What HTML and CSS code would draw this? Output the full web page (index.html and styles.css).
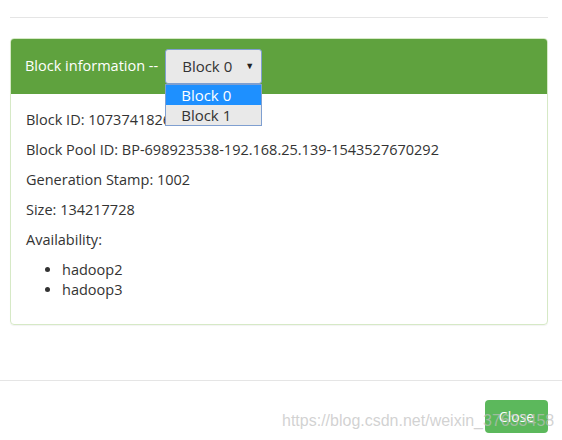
FILE: index.html
```html
<!DOCTYPE html>
<html lang="en">
<head>
  <meta charset="UTF-8" />
  <title>Block information</title>
  <link rel="stylesheet" href="styles.css">
</head>
<body>
  <div class="modal">
    <div class="modal-body">
      <hr class="rule">
      <div class="panel">
        <div class="panel-heading">
          <span class="panel-title">Block information --</span>
          <div class="select">
            <span class="select-value">Block 0</span>
            <span class="select-arrow">&#9660;</span>
            <ul class="select-list">
              <li class="active">Block 0</li>
              <li>Block 1</li>
            </ul>
          </div>
        </div>
        <div class="panel-body">
          <p>Block ID: 1073741826</p>
          <p>Block Pool ID: BP-698923538-192.168.25.139-1543527670292</p>
          <p>Generation Stamp: 1002</p>
          <p>Size: 134217728</p>
          <p>Availability:</p>
          <ul>
            <li>hadoop2</li>
            <li>hadoop3</li>
          </ul>
        </div>
      </div>
    </div>
    <div class="modal-footer">
      <button class="btn">Close</button>
      <span class="watermark">https://blog.csdn.net/weixin_37633458</span>
    </div>
  </div>
</body>
</html>
```

FILE: styles.css
```css
body {
  margin: 0;
  font-family: "Open Sans", "Noto Sans", sans-serif;
  font-size: 14.5px;
  line-height: 20px;
  color: #333;
  background: #fff;
}
.modal-body {
  padding: 17px 14px 0 10px;
}
.rule {
  margin: 0;
  border: 0;
  border-top: 1px solid #e5e5e5;
}
.panel {
  margin: 20px 0 55px;
  border: 1px solid #d6e9c6;
  border-radius: 4px;
  box-shadow: 0 1px 1px rgba(0,0,0,0.05);
}
.panel-heading {
  height: 55px;
  padding: 0 14px 2px;
  box-sizing: border-box;
  display: flex;
  align-items: center;
  background-color: #5fa23e;
  border-radius: 3px 3px 0 0;
}
.panel-title {
  color: #fff;
  font-size: 14.5px;
  margin-right: 7px;
}
.select {
  position: relative;
  width: 95px;
  height: 33px;
  margin-top: 1px;
  display: flex;
  align-items: center;
  background: #e9e9e9;
  border: 1px solid #7f9fd0;
  border-radius: 3px;
  font-size: 15px;
}
.select-value {
  margin-left: 16px;
  flex: 1;
}
.select-arrow {
  font-size: 9px;
  margin-right: 7px;
  color: #222;
}
.select-list {
  position: absolute;
  top: 34px;
  left: -1px;
  width: 95px;
  margin: 0;
  padding: 0;
  list-style: none;
  background: #e9e9e9;
  border: 1px solid #7f9fd0;
}
.select-list li {
  height: 20px;
  line-height: 20px;
  padding-left: 15px;
}
.select-list li.active {
  background: #1e90ff;
  color: #fff;
}
.panel-body {
  padding: 16px 15px 14px;
}
.panel-body p {
  margin: 0 0 10px;
}
.panel-body ul {
  margin: 0 0 10px;
  padding-left: 36px;
}
.modal-footer {
  position: relative;
  border-top: 1px solid #e5e5e5;
  padding: 19px 14px 6px;
  text-align: right;
}
.btn {
  width: 63px;
  height: 33px;
  padding: 0;
  background-color: #5cb85c;
  color: #fff;
  border: none;
  border-radius: 4px;
  font-family: inherit;
  font-size: 14px;
}
.watermark {
  position: absolute;
  left: 282px;
  top: 30px;
  font-family: "Liberation Sans", Arial, sans-serif;
  font-size: 16px;
  color: rgba(190,190,190,0.7);
  white-space: nowrap;
}
```
